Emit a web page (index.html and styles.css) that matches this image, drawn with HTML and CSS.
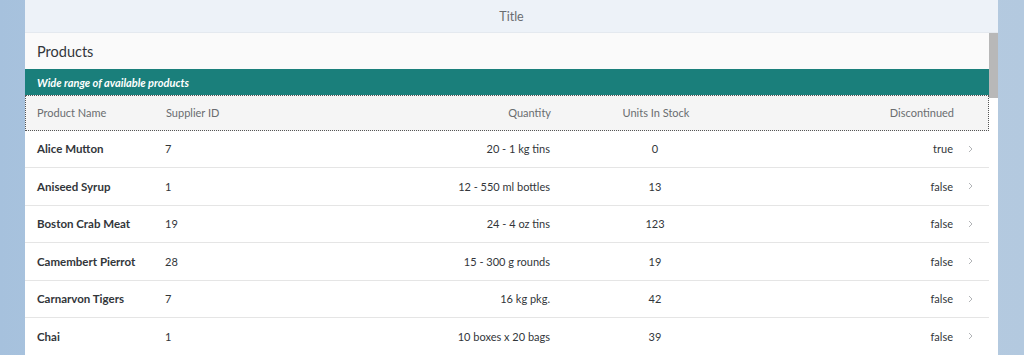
FILE: index.html
```html
<!DOCTYPE html>
<html lang="en">

<head>
    <meta charset="UTF-8">
    <title>Products</title>
    <link rel="stylesheet" href="styles.css">
</head>

<body>
    <div class="shell">
        <div class="app-header">Title</div>

        <div class="page">
            <div class="content">
                <div class="toolbar">Products</div>
                <div class="info-bar">Wide range of available products</div>

                <div class="row head-row">
                    <div class="cell">Product Name</div>
                    <div class="cell">Supplier ID</div>
                    <div class="cell end">Quantity</div>
                    <div class="cell center">Units In Stock</div>
                    <div class="cell end">Discontinued</div>
                    <div class="cell"></div>
                </div>

                <div class="row">
                    <div class="cell name">Alice Mutton</div>
                    <div class="cell">7</div>
                    <div class="cell end">20 - 1 kg tins</div>
                    <div class="cell center">0</div>
                    <div class="cell end">true</div>
                    <div class="cell nav"><svg viewBox="0 0 5 8"><path d="M1 1l3 3-3 3"/></svg></div>
                </div>
                <div class="row">
                    <div class="cell name">Aniseed Syrup</div>
                    <div class="cell">1</div>
                    <div class="cell end">12 - 550 ml bottles</div>
                    <div class="cell center">13</div>
                    <div class="cell end">false</div>
                    <div class="cell nav"><svg viewBox="0 0 5 8"><path d="M1 1l3 3-3 3"/></svg></div>
                </div>
                <div class="row">
                    <div class="cell name">Boston Crab Meat</div>
                    <div class="cell">19</div>
                    <div class="cell end">24 - 4 oz tins</div>
                    <div class="cell center">123</div>
                    <div class="cell end">false</div>
                    <div class="cell nav"><svg viewBox="0 0 5 8"><path d="M1 1l3 3-3 3"/></svg></div>
                </div>
                <div class="row">
                    <div class="cell name">Camembert Pierrot</div>
                    <div class="cell">28</div>
                    <div class="cell end">15 - 300 g rounds</div>
                    <div class="cell center">19</div>
                    <div class="cell end">false</div>
                    <div class="cell nav"><svg viewBox="0 0 5 8"><path d="M1 1l3 3-3 3"/></svg></div>
                </div>
                <div class="row">
                    <div class="cell name">Carnarvon Tigers</div>
                    <div class="cell">7</div>
                    <div class="cell end">16 kg pkg.</div>
                    <div class="cell center">42</div>
                    <div class="cell end">false</div>
                    <div class="cell nav"><svg viewBox="0 0 5 8"><path d="M1 1l3 3-3 3"/></svg></div>
                </div>
                <div class="row">
                    <div class="cell name">Chai</div>
                    <div class="cell">1</div>
                    <div class="cell end">10 boxes x 20 bags</div>
                    <div class="cell center">39</div>
                    <div class="cell end">false</div>
                    <div class="cell nav"><svg viewBox="0 0 5 8"><path d="M1 1l3 3-3 3"/></svg></div>
                </div>
            </div>

            <div class="scrollbar">
                <div class="thumb"></div>
            </div>
        </div>
    </div>
</body>

</html>
```

FILE: styles.css
```css
* {
    margin: 0;
    padding: 0;
    box-sizing: border-box;
}

body {
    font-family: Lato, "Open Sans", sans-serif;
    background: linear-gradient(90deg, #a6c1dd 0%, #bdd0e3 50%, #b3c9df 100%);
    height: 355px;
    overflow: hidden;
    color: #32363a;
}

.shell {
    width: 973px;
    margin-left: 25px;
    height: 355px;
    display: flex;
    flex-direction: column;
    background: #fff;
}

.app-header {
    height: 33px;
    flex-shrink: 0;
    display: flex;
    align-items: center;
    justify-content: center;
    background: #edf2f8;
    border-bottom: 1px solid #e4e9ef;
    color: #6a6d70;
    font-size: 12.5px;
}

.page {
    flex: 1;
    display: flex;
    overflow: hidden;
}

.content {
    width: 964px;
    flex-shrink: 0;
}

.toolbar {
    height: 36px;
    display: flex;
    align-items: center;
    padding-left: 12px;
    background: #fafafa;
    font-size: 14.5px;
    color: #32363a;
}

.info-bar {
    height: 26px;
    display: flex;
    align-items: center;
    padding-left: 12px;
    background: #1a7f7b;
    color: #fff;
    font-size: 11px;
    font-style: italic;
    font-weight: 700;
}

.row {
    display: grid;
    grid-template-columns: 128px 204px 205px 186px 217px 24px;
    height: 37.5px;
    align-items: center;
    border-bottom: 1px solid #e5e5e5;
    font-size: 11px;
}

.head-row {
    height: 35.5px;
    background: #f5f5f5;
    color: #6a6d70;
    border: 1px dotted #555;
}

.cell {
    padding: 0 12px;
    white-space: nowrap;
}

.head-row .cell:first-child {
    padding-left: 11px;
}

.end {
    text-align: right;
}

.center {
    text-align: center;
}

.name {
    font-weight: 700;
    font-size: 11.5px;
}

.nav {
    padding: 0 0 0 3px;
    display: flex;
    align-items: center;
}

.nav svg {
    width: 5px;
    height: 8px;
    fill: none;
    stroke: #a9acaf;
    stroke-width: 0.9;
}

.scrollbar {
    flex: 1;
    background: #fff;
}

.thumb {
    height: 65px;
    background: #b8b8b8;
}
```
